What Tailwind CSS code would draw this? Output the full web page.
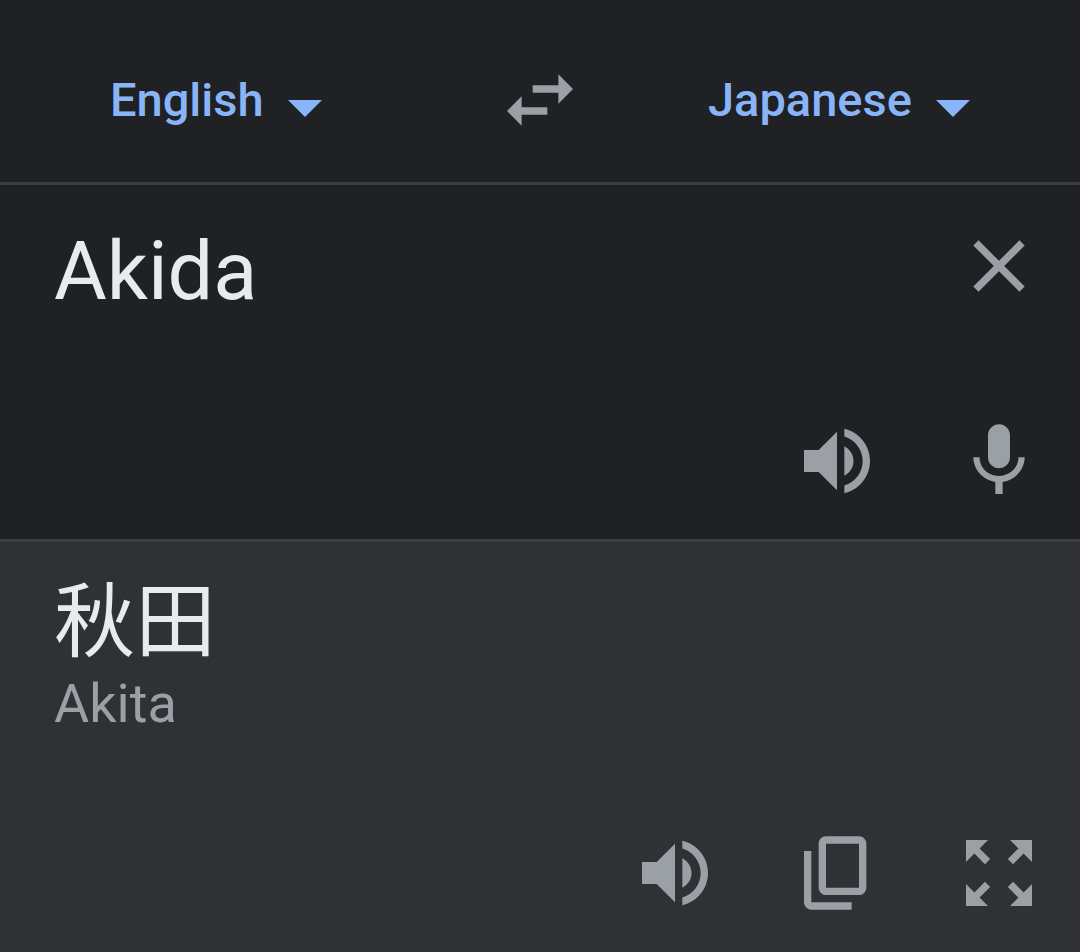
<!DOCTYPE html>
<html lang="en">
<head>
  <meta charset="UTF-8" />
  <meta name="viewport" content="width=device-width, initial-scale=1.0" />
  <title>Translate</title>
  <script src="https://cdn.jsdelivr.net/npm/@tailwindcss/browser@4"></script>
</head>
<body class="flex flex-col min-h-screen bg-[#303134] font-['Roboto','Noto_Sans_CJK_JP',sans-serif] text-[#e8eaed]">
  <!-- Language bar -->
  <header class="grid grid-cols-[1fr_auto_1fr] items-center px-[110px] pt-14 pb-[38px] bg-[#202124] border-b-3 border-[#3c4043]">
    <div class="flex items-center gap-6 text-[#8ab4f8]">
      <select id="sourceLang" aria-label="Source language" class="appearance-none bg-transparent text-[47px] leading-[64px] font-medium outline-none">
        <option>English</option>
      </select>
      <svg class="w-[34px] h-[17px] mt-4 pointer-events-none" viewBox="0 0 34 17" fill="currentColor"><path d="M0 0h34L17 17z" /></svg>
    </div>

    <button id="swapBtn" aria-label="Swap languages" class="text-[#9aa0a6]">
      <svg class="w-22 h-22" viewBox="0 0 24 24" fill="currentColor"><path d="M6.99 11L3 15l3.99 4v-3H14v-2H6.99v-3zM21 9l-3.99-4v3H10v2h7.01v3L21 9z" /></svg>
    </button>

    <div class="flex items-center justify-end gap-6 text-[#8ab4f8]">
      <select id="targetLang" aria-label="Target language" class="appearance-none bg-transparent text-[47px] leading-[64px] font-medium outline-none">
        <option>Japanese</option>
      </select>
      <svg class="w-[34px] h-[17px] mt-4 pointer-events-none" viewBox="0 0 34 17" fill="currentColor"><path d="M0 0h34L17 17z" /></svg>
    </div>
  </header>

  <!-- Source text -->
  <section class="flex flex-col gap-[95px] pl-[54px] pr-[37px] pt-[37px] pb-[34px] bg-[#202124] border-b-3 border-[#3c4043]">
    <div class="flex items-start">
      <textarea id="sourceText" rows="1" aria-label="Source text" spellcheck="false" class="flex-1 min-w-0 h-[100px] resize-none overflow-hidden bg-transparent text-[81px] leading-[100px] outline-none">Akida</textarea>
      <button aria-label="Clear text" class="text-[#9aa0a6]">
        <svg class="w-22 h-22" viewBox="0 0 24 24" fill="currentColor"><path d="M19 6.41L17.59 5 12 10.59 6.41 5 5 6.41 10.59 12 5 17.59 6.41 19 12 13.41 17.59 19 19 17.59 13.41 12z" /></svg>
      </button>
    </div>
    <div class="flex justify-end gap-[74px] text-[#9aa0a6]">
      <button aria-label="Listen to source text">
        <svg class="w-22 h-22" viewBox="0 0 24 24" fill="currentColor"><path d="M3 9v6h4l5 5V4L7 9H3zm13.5 3c0-1.77-1.02-3.29-2.5-4.03v8.05c1.48-.73 2.5-2.25 2.5-4.02zM14 3.23v2.06c2.89.86 5 3.54 5 6.71s-2.11 5.85-5 6.71v2.06c4.01-.91 7-4.49 7-8.77s-2.99-7.86-7-8.77z" /></svg>
      </button>
      <button aria-label="Speak">
        <svg class="w-22 h-22" viewBox="0 0 24 24" fill="currentColor"><path d="M12 14c1.66 0 3-1.34 3-3V5c0-1.66-1.34-3-3-3S9 3.34 9 5v6c0 1.66 1.34 3 3 3zm5.3-3c0 3-2.54 5.1-5.3 5.1S6.7 14 6.7 11H5c0 3.41 2.72 6.23 6 6.72V21h2v-3.28c3.28-.48 6-3.3 6-6.72h-1.7z" /></svg>
      </button>
    </div>
  </section>

  <!-- Translation -->
  <section class="flex flex-col gap-[93px] pl-[54px] pr-[37px] pt-8 pb-[35px]">
    <div>
      <p lang="ja" class="text-[81px] leading-[98px]">秋田</p>
      <p class="text-[54px] leading-[64px] text-[#9aa0a6]">Akita</p>
    </div>
    <div class="flex justify-end gap-[74px] text-[#9aa0a6]">
      <button aria-label="Listen to translation">
        <svg class="w-22 h-22" viewBox="0 0 24 24" fill="currentColor"><path d="M3 9v6h4l5 5V4L7 9H3zm13.5 3c0-1.77-1.02-3.29-2.5-4.03v8.05c1.48-.73 2.5-2.25 2.5-4.02zM14 3.23v2.06c2.89.86 5 3.54 5 6.71s-2.11 5.85-5 6.71v2.06c4.01-.91 7-4.49 7-8.77s-2.99-7.86-7-8.77z" /></svg>
      </button>
      <button aria-label="Copy translation">
        <svg class="w-22 h-22" viewBox="0 0 24 24" fill="currentColor"><path d="M18 2H9c-1.1 0-2 .9-2 2v12c0 1.1.9 2 2 2h9c1.1 0 2-.9 2-2V4c0-1.1-.9-2-2-2zm0 14H9V4h9v12zM3 6v14c0 1.1.9 2 2 2h11v-2H5V6H3z" /></svg>
      </button>
      <button aria-label="Full screen">
        <svg class="w-22 h-22" viewBox="0 0 24 24" fill="currentColor"><path d="M15 3l2.3 2.3-2.89 2.87 1.42 1.42L18.7 6.7 21 9V3h-6zM3 9l2.3-2.3 2.87 2.89 1.42-1.42L6.7 5.3 9 3H3v6zm6 12l-2.3-2.3 2.89-2.87-1.42-1.42L5.3 17.3 3 15v6h6zm12-6l-2.3 2.3-2.87-2.89-1.42 1.42 2.89 2.87L15 21h6v-6z" /></svg>
      </button>
    </div>
  </section>
</body>
</html>
